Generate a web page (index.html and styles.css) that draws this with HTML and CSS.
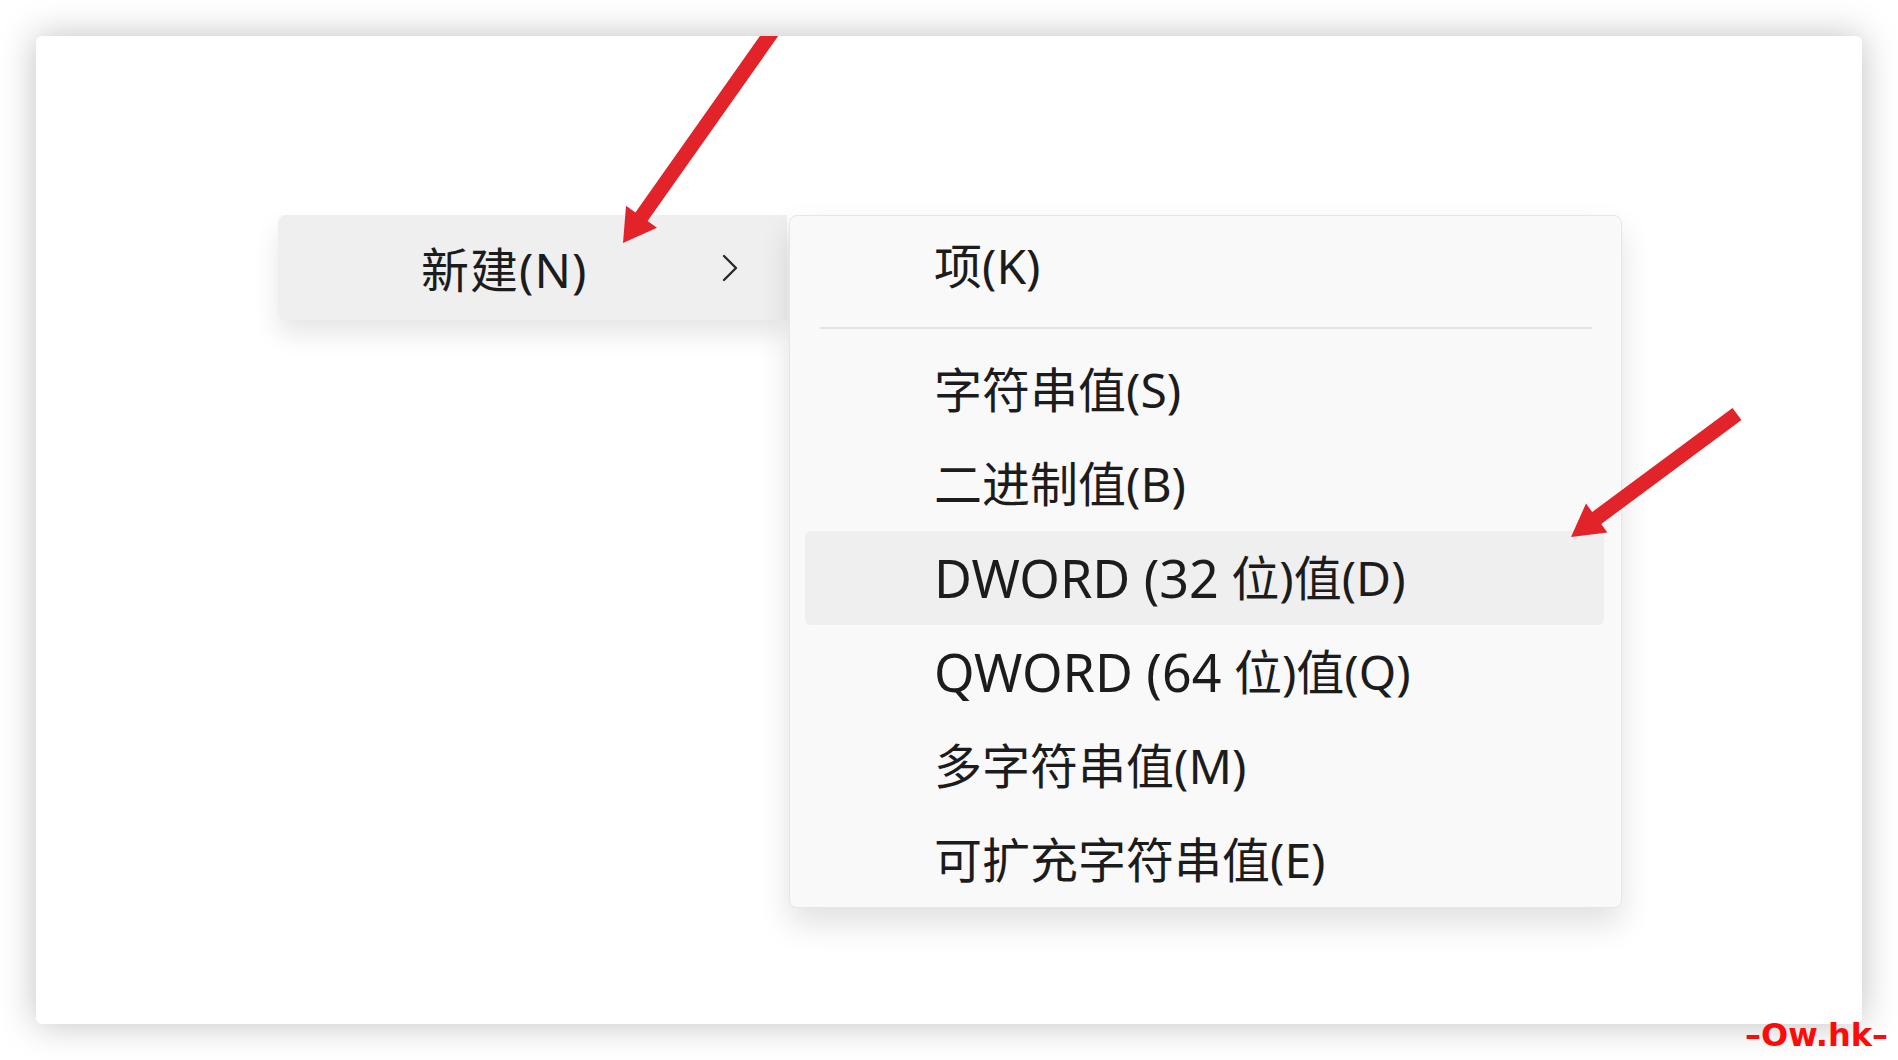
FILE: index.html
```html
<!DOCTYPE html>
<html lang="zh-CN">
<head>
  <meta charset="UTF-8" />
  <meta name="viewport" content="width=device-width, initial-scale=1.0"/>
  <title>新建 - 注册表</title>
  <link rel="stylesheet" href="styles.css">
</head>
<body>

<div class="card">
  <div class="menus">
    <div class="parent-item">
      <span class="label">新建(N)</span>
      <svg class="chevron" width="16" height="28" viewBox="0 0 16 28">
        <polyline points="2,2 14,14 2,26" />
      </svg>
    </div>

    <div class="submenu">
      <div class="item">项(K)</div>
      <div class="separator"></div>
      <div class="item">字符串值(S)</div>
      <div class="item">二进制值(B)</div>
      <div class="item active"><span class="word">DWORD (32</span>&nbsp;位)值(D)</div>
      <div class="item"><span class="word">QWORD (64</span>&nbsp;位)值(Q)</div>
      <div class="item">多字符串值(M)</div>
      <div class="item">可扩充字符串值(E)</div>
    </div>
  </div>
</div>

<!-- red arrows drawn on top of the screenshot -->
<svg class="annotations" width="1898" height="1060" viewBox="0 0 1898 1060">
  <polygon points="759.9,36 778.2,36 647.6,221.1 657,227.8 623,243 626,205.8 635.4,212.5" />
  <polygon points="1732.5,408 1741.5,420 1601.2,524 1607.4,532.5 1571,537 1586,503.5 1592.2,512" />
</svg>

<div class="watermark">–Ow.hk–</div>

</body>
</html>
```

FILE: styles.css
```css
body {
  margin: 0;
  padding: 36px;
  width: 1898px;
  height: 1060px;
  box-sizing: border-box;
  position: relative;
  background: #fff;
  color: #1c1c1c;
  font-family: "Noto Sans", "Noto Sans CJK SC", sans-serif;
  overflow: hidden;
}

.card {
  height: 100%;
  box-sizing: border-box;
  padding: 179px 0 0 242px;
  background: #fff;
  border-radius: 6px;
  box-shadow: 0 0 36px rgba(0,0,0,0.25);
}

.menus {
  display: flex;
  align-items: flex-start;
  gap: 2px;
}

.parent-item {
  width: 509px;
  height: 105px;
  box-sizing: border-box;
  padding: 0 49px 0 143px;
  display: flex;
  justify-content: space-between;
  align-items: center;
  background: #efefef;
  border-radius: 8px 0 0 8px;
  box-shadow: 0 14px 26px rgba(0,0,0,0.1);
}

.parent-item .label {
  font-size: 48px;
  line-height: 1;
  letter-spacing: 1px;
  padding-top: 4px;
}

.chevron polyline {
  fill: none;
  stroke: #2a2a2a;
  stroke-width: 2.4;
  stroke-linecap: round;
  stroke-linejoin: round;
}

.submenu {
  width: 833px;
  box-sizing: border-box;
  padding-top: 3px;
  background: #f9f9f9;
  border: 1px solid #e6e6e6;
  border-radius: 8px;
  box-shadow: 0 16px 32px rgba(0,0,0,0.12);
}

.item {
  height: 94px;
  margin: 0 17px 0 15px;
  padding-left: 129px;
  display: flex;
  align-items: center;
  font-size: 48px;
  line-height: 1;
  white-space: pre;
  border-radius: 6px;
}

.item .word {
  font-size: 52px;
}

.item.active {
  background: #efefef;
}

.separator {
  height: 2px;
  margin: 14px 29px 14px 30px;
  background: #e3e3e3;
}

.annotations {
  position: absolute;
  left: 0;
  top: 0;
  pointer-events: none;
}

.annotations polygon {
  fill: #e2232a;
}

.watermark {
  position: absolute;
  right: 10px;
  bottom: 9px;
  font-family: "DejaVu Sans", sans-serif;
  font-weight: bold;
  font-size: 32px;
  line-height: 1;
  color: #ff0a0a;
}
```
